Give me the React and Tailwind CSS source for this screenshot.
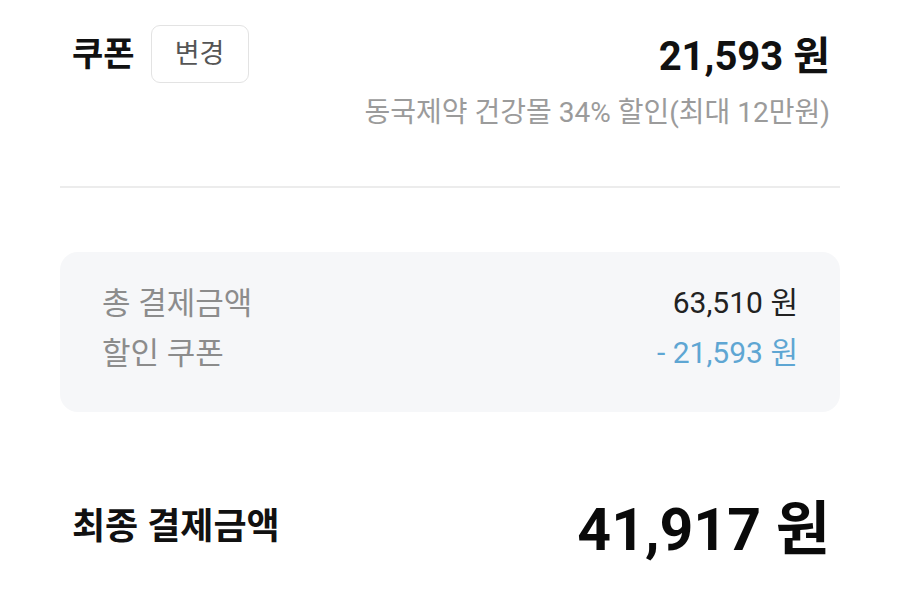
import React from "react";

const F = { fontFamily: 'Roboto, "Noto Sans CJK KR", sans-serif' };

export default function App() {
  return (
    <div
      className="w-[900px] h-[609px] bg-white overflow-hidden text-[#111]"
      style={F}
    >
      <div className="px-[70px] pt-[25px]">
        <div className="flex items-center justify-between h-[58px]">
          <div className="flex items-center gap-[16px]">
            <span className="text-[34px] font-bold leading-none text-[#111] pl-[2px]">
              쿠폰
            </span>
            <button className="w-[98px] h-[58px] rounded-[9px] border-[1.5px] border-[#e3e3e3] bg-white text-[27px] text-[#555] leading-none">
              변경
            </button>
          </div>
          <span className="pt-[6px] text-[40px] font-bold leading-none text-[#111]">
            21,593 원
          </span>
        </div>
        <div className="mt-[12px] text-right text-[28px] leading-[36px] text-[#9b9b9b]">
          동국제약 건강몰 34% 할인(최대 12만원)
        </div>
      </div>

      <div className="mx-[60px] mt-[55px] h-[2px] bg-[#ececec]" />

      <div className="mx-[60px] mt-[64px] h-[160px] rounded-[18px] bg-[#f6f7f9] px-[42px] pt-[26px]">
        <div className="flex items-center justify-between h-[50px]">
          <span className="text-[31px] text-[#8c8c8c] leading-none">총 결제금액</span>
          <span className="text-[30px] text-[#222] leading-none">63,510 원</span>
        </div>
        <div className="flex items-center justify-between h-[50px]">
          <span className="text-[31px] text-[#8c8c8c] leading-none">할인 쿠폰</span>
          <span className="text-[30px] text-[#5ea6d3] leading-none">- 21,593 원</span>
        </div>
      </div>

      <div className="mt-[75px] px-[70px] flex items-center justify-between h-[80px]">
        <span className="text-[36px] font-bold leading-none text-[#111] pl-[2px]">
          최종 결제금액
        </span>
        <span className="text-[59px] font-bold leading-none text-[#0a0a0a] pt-[4px]">
          41,917 원
        </span>
      </div>
    </div>
  );
}
